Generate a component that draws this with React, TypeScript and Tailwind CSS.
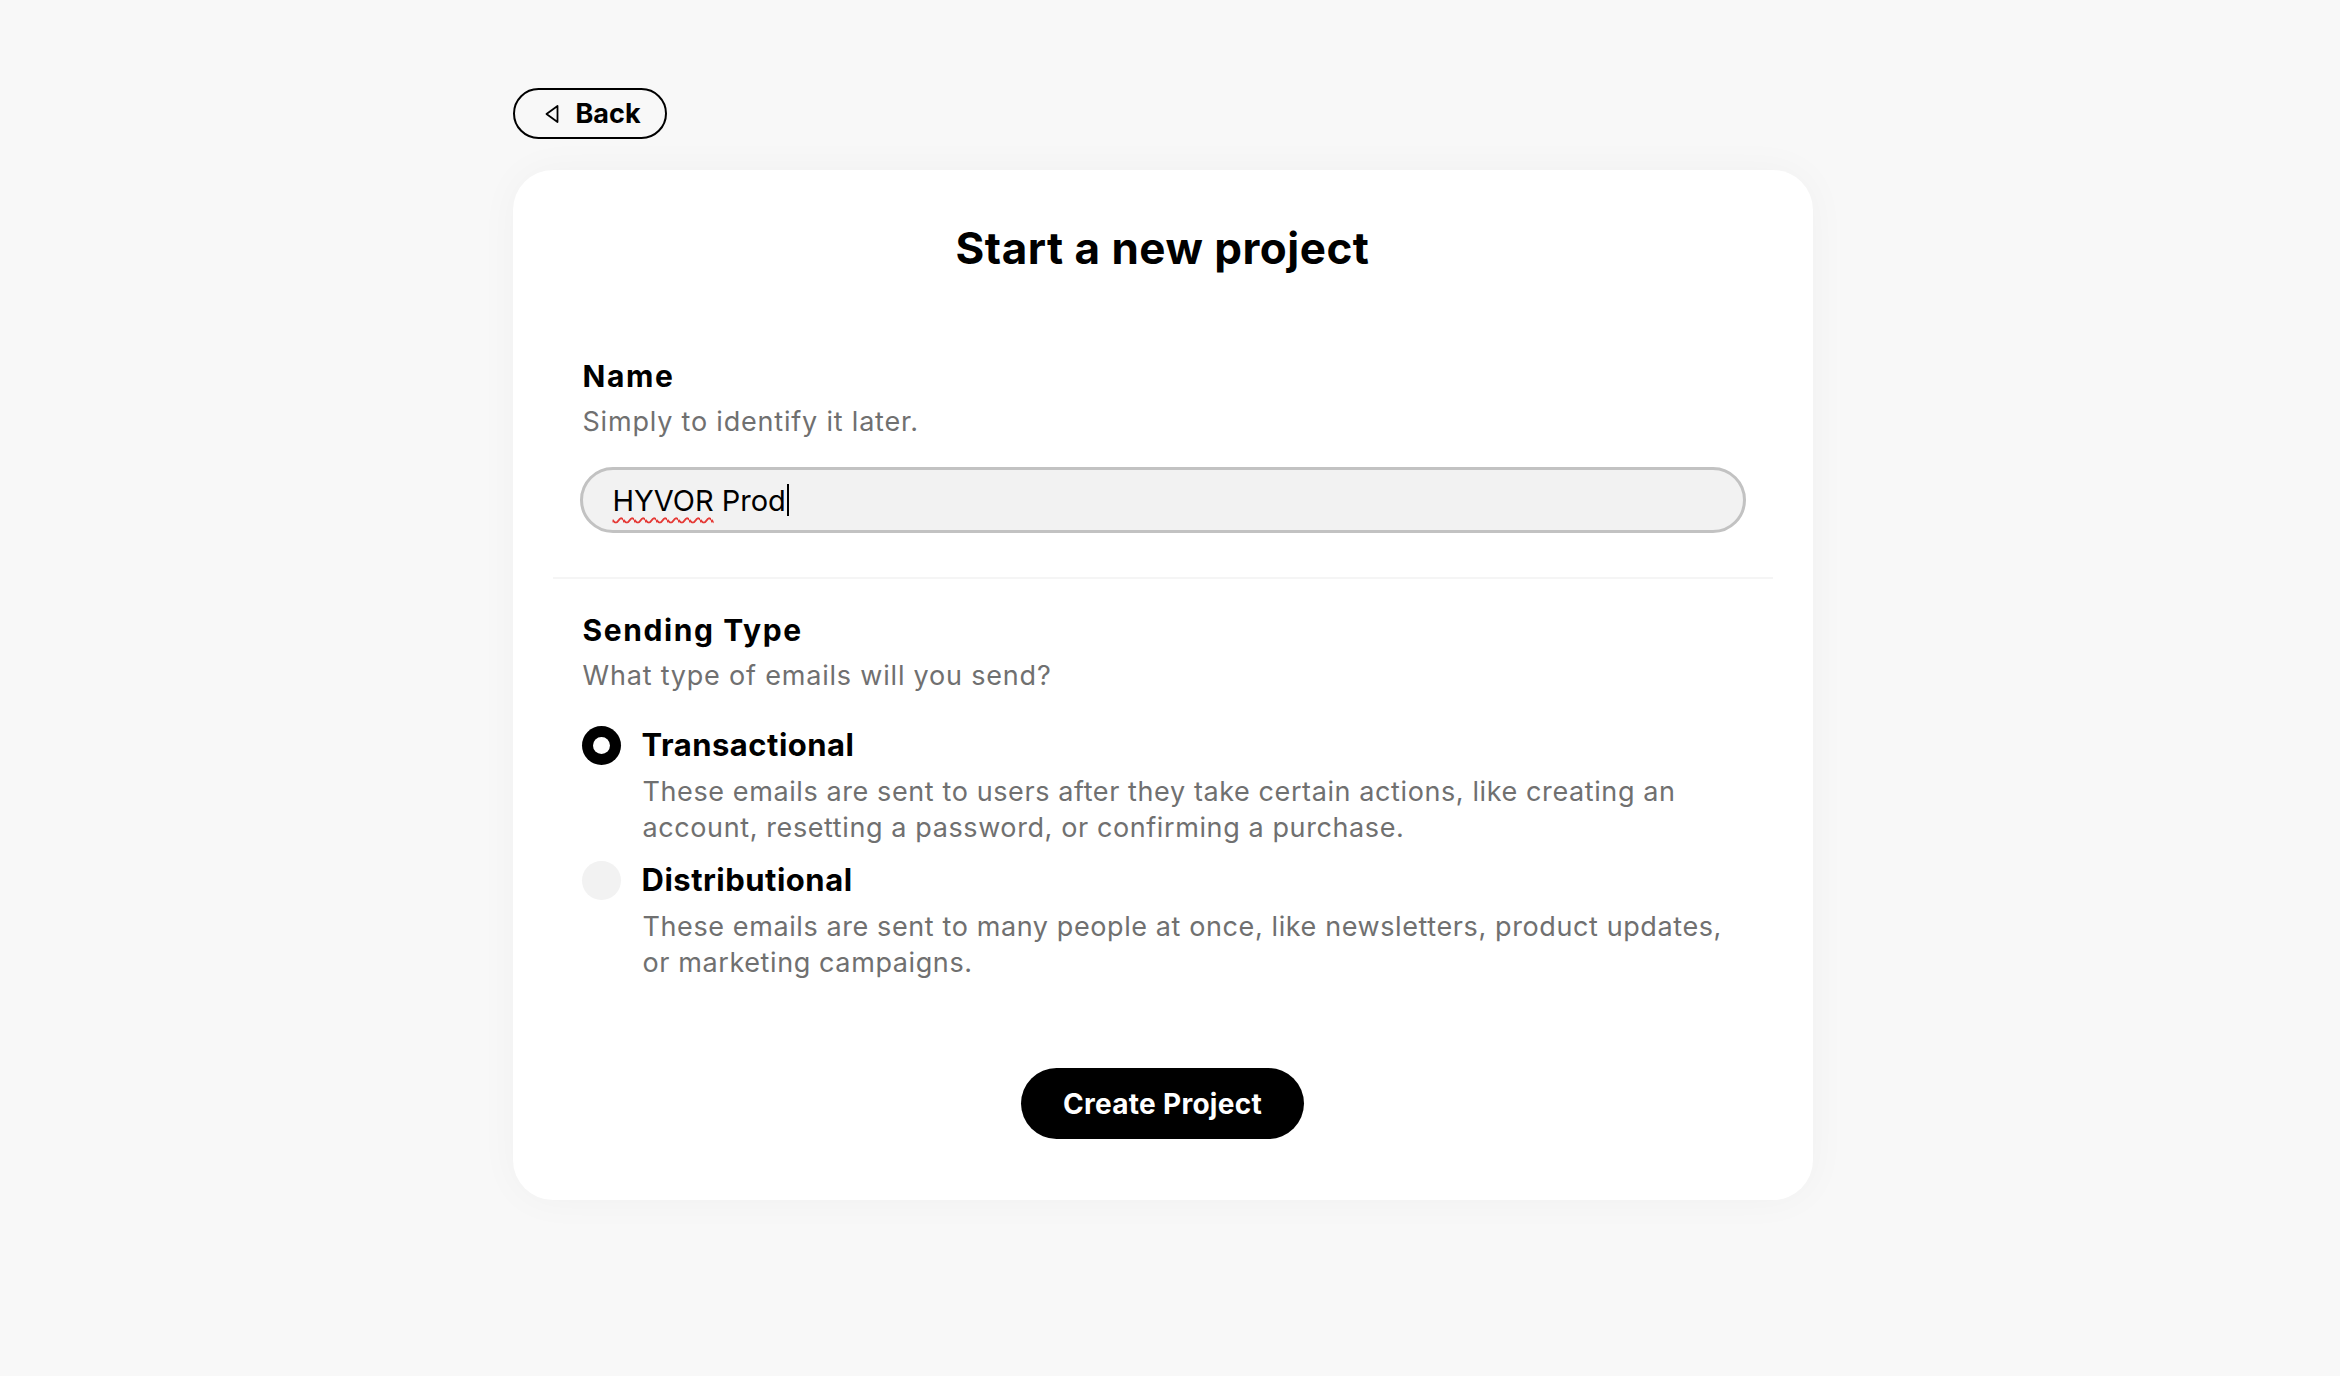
import React from "react";

function Radio({ checked }: { checked: boolean }) {
  return checked ? (
    <div className="w-[39px] h-[39px] rounded-full bg-black flex items-center justify-center shrink-0">
      <div className="w-[17px] h-[17px] rounded-full bg-white" />
    </div>
  ) : (
    <div className="w-[39px] h-[39px] rounded-full bg-[#f2f2f2] shrink-0" />
  );
}

function Option({
  checked,
  title,
  desc,
  className,
}: {
  checked: boolean;
  title: string;
  desc: string;
  className?: string;
}) {
  return (
    <div className={className}>
      <div className="flex items-center h-[36px]">
        <div className="w-[60px] -ml-[1px] flex items-center">
          <Radio checked={checked} />
        </div>
        <div className="text-[31px] leading-[36px] font-bold tracking-[0.5px] text-black">{title}</div>
      </div>
      <div className="mt-[11px] pl-[60px] text-[27px] leading-[36px] tracking-[0.6px] text-[#707070]">
        {desc}
      </div>
    </div>
  );
}

export default function App() {
  return (
    <div
      className="min-h-screen bg-[#f8f8f8] pr-[15px] pt-[88px] pb-[100px]"
      style={{ fontFamily: "Inter, 'Noto Sans', sans-serif" }}
    >
      <div className="w-[1300px] mx-auto">
        <button className="h-[51px] w-[154px] rounded-full border-2 border-black flex items-center pl-[29px] bg-transparent">
          <svg width="16" height="20" viewBox="0 0 16 20" className="mr-[16px]">
            <path
              d="M13.5 2 L2.5 10 L13.5 18 Z"
              fill="none"
              stroke="black"
              strokeWidth="1.8"
              strokeLinejoin="round"
            />
          </svg>
          <span className="text-[27px] leading-none font-bold text-black">Back</span>
        </button>

        <div className="mt-[31px] bg-white rounded-[40px] px-[40px] pt-[53px] pb-[61px] shadow-[0_0_40px_rgba(0,0,0,0.035)]">
          <h1 className="text-[44px] leading-[50px] font-bold tracking-[0.5px] text-center text-black">
            Start a new project
          </h1>

          <div className="px-[30px] mt-[86px]">
            <div className="text-[30px] leading-[34px] font-bold tracking-[1.6px] text-black">Name</div>
            <div className="mt-[12px] text-[27px] leading-[34px] tracking-[0.8px] text-[#707070]">
              Simply to identify it later.
            </div>
            <div className="mt-[28px] -mx-[3px] h-[66px] rounded-full border-[3px] border-[#c2c2c2] bg-[#f2f2f2] flex items-center pl-[30px]">
              <span className="text-[29px] leading-none text-black">
                <span className="underline decoration-wavy decoration-[#e53935] decoration-[1.5px] underline-offset-[6px]">
                  HYVOR
                </span>{" "}
                Prod
              </span>
              <span className="w-[2px] h-[32px] bg-black ml-[1px]" />
            </div>
          </div>

          <div className="mt-[44px] h-[2px] bg-[#f5f5f5]" />

          <div className="px-[30px] mt-[34px]">
            <div className="text-[30px] leading-[34px] font-bold tracking-[1.6px] text-black">Sending Type</div>
            <div className="mt-[12px] text-[27px] leading-[34px] tracking-[0.8px] text-[#707070]">
              What type of emails will you send?
            </div>
            <Option
              className="mt-[34px]"
              checked
              title="Transactional"
              desc="These emails are sent to users after they take certain actions, like creating an account, resetting a password, or confirming a purchase."
            />
            <Option
              className="mt-[16px]"
              checked={false}
              title="Distributional"
              desc="These emails are sent to many people at once, like newsletters, product updates, or marketing campaigns."
            />
          </div>

          <div className="mt-[87px] flex justify-center">
            <button className="h-[71px] px-[42px] rounded-full bg-black text-white text-[28px] tracking-[0.3px] font-bold leading-none">
              Create Project
            </button>
          </div>
        </div>
      </div>
    </div>
  );
}
